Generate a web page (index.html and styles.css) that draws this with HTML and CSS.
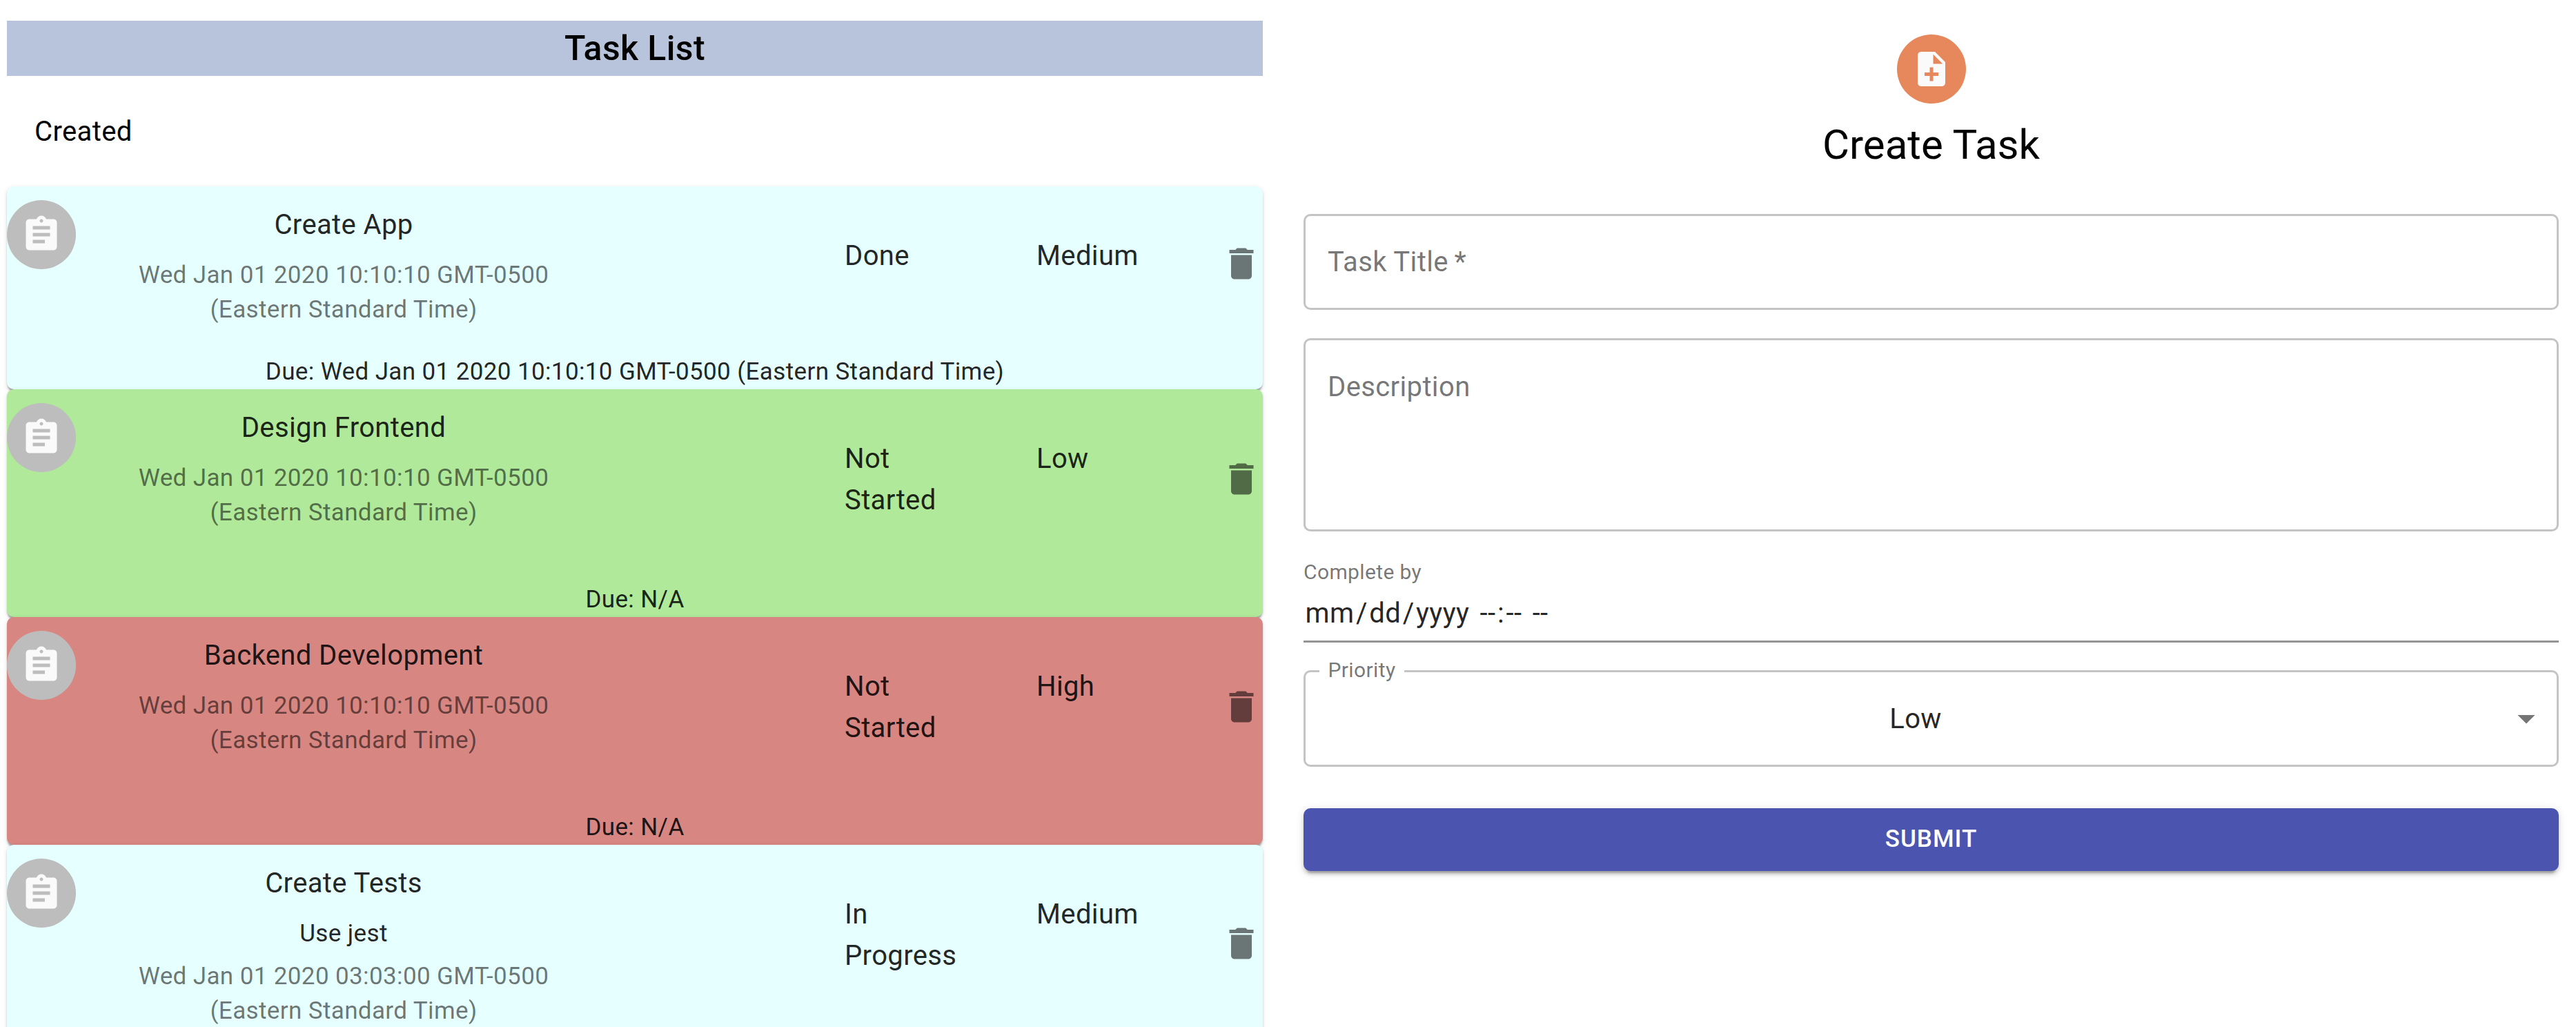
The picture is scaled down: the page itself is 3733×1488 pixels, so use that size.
FILE: index.html
```html
<!DOCTYPE html>
<html lang="en">
<head>
<meta charset="utf-8">
<title>Tasks</title>
<link rel="stylesheet" href="styles.css">
</head>
<body>
<main class="page">
  <section class="list-col">
    <h1 class="list-title">Task List</h1>
    <div class="group-label">Created</div>

    <article class="card card-cyan">
      <div class="card-row">
        <div class="avatar"><svg class="icon" viewBox="0 0 24 24"><path d="M19 3h-4.18C14.4 1.84 13.3 1 12 1c-1.3 0-2.4.84-2.82 2H5c-1.1 0-2 .9-2 2v14c0 1.1.9 2 2 2h14c1.1 0 2-.9 2-2V5c0-1.1-.9-2-2-2zm-7 0c.55 0 1 .45 1 1s-.45 1-1 1-1-.45-1-1 .45-1 1-1zm2 14H7v-2h7v2zm3-4H7v-2h10v2zm0-4H7V7h10v2z"/></svg></div>
        <div class="task-text">
          <div class="task-name">Create App</div>
          <div class="task-date">Wed Jan 01 2020 10:10:10 GMT-0500 (Eastern Standard Time)</div>
        </div>
        <div class="task-status">Done</div>
        <div class="task-priority">Medium</div>
        <svg class="trash" viewBox="0 0 24 24"><path d="M6 19c0 1.1.9 2 2 2h8c1.1 0 2-.9 2-2V7H6v12zM19 4h-3.5l-1-1h-5l-1 1H5v2h14V4z"/></svg>
      </div>
      <div class="task-due">Due: Wed Jan 01 2020 10:10:10 GMT-0500 (Eastern Standard Time)</div>
    </article>

    <article class="card card-green">
      <div class="card-row card-row-tall">
        <div class="avatar"><svg class="icon" viewBox="0 0 24 24"><path d="M19 3h-4.18C14.4 1.84 13.3 1 12 1c-1.3 0-2.4.84-2.82 2H5c-1.1 0-2 .9-2 2v14c0 1.1.9 2 2 2h14c1.1 0 2-.9 2-2V5c0-1.1-.9-2-2-2zm-7 0c.55 0 1 .45 1 1s-.45 1-1 1-1-.45-1-1 .45-1 1-1zm2 14H7v-2h7v2zm3-4H7v-2h10v2zm0-4H7V7h10v2z"/></svg></div>
        <div class="task-text">
          <div class="task-name">Design Frontend</div>
          <div class="task-date">Wed Jan 01 2020 10:10:10 GMT-0500 (Eastern Standard Time)</div>
        </div>
        <div class="task-status">Not Started</div>
        <div class="task-priority">Low</div>
        <svg class="trash" viewBox="0 0 24 24"><path d="M6 19c0 1.1.9 2 2 2h8c1.1 0 2-.9 2-2V7H6v12zM19 4h-3.5l-1-1h-5l-1 1H5v2h14V4z"/></svg>
      </div>
      <div class="task-due">Due: N/A</div>
    </article>

    <article class="card card-red">
      <div class="card-row card-row-tall">
        <div class="avatar"><svg class="icon" viewBox="0 0 24 24"><path d="M19 3h-4.18C14.4 1.84 13.3 1 12 1c-1.3 0-2.4.84-2.82 2H5c-1.1 0-2 .9-2 2v14c0 1.1.9 2 2 2h14c1.1 0 2-.9 2-2V5c0-1.1-.9-2-2-2zm-7 0c.55 0 1 .45 1 1s-.45 1-1 1-1-.45-1-1 .45-1 1-1zm2 14H7v-2h7v2zm3-4H7v-2h10v2zm0-4H7V7h10v2z"/></svg></div>
        <div class="task-text">
          <div class="task-name">Backend Development</div>
          <div class="task-date">Wed Jan 01 2020 10:10:10 GMT-0500 (Eastern Standard Time)</div>
        </div>
        <div class="task-status">Not Started</div>
        <div class="task-priority">High</div>
        <svg class="trash" viewBox="0 0 24 24"><path d="M6 19c0 1.1.9 2 2 2h8c1.1 0 2-.9 2-2V7H6v12zM19 4h-3.5l-1-1h-5l-1 1H5v2h14V4z"/></svg>
      </div>
      <div class="task-due">Due: N/A</div>
    </article>

    <article class="card card-cyan card-last">
      <div class="card-row">
        <div class="avatar"><svg class="icon" viewBox="0 0 24 24"><path d="M19 3h-4.18C14.4 1.84 13.3 1 12 1c-1.3 0-2.4.84-2.82 2H5c-1.1 0-2 .9-2 2v14c0 1.1.9 2 2 2h14c1.1 0 2-.9 2-2V5c0-1.1-.9-2-2-2zm-7 0c.55 0 1 .45 1 1s-.45 1-1 1-1-.45-1-1 .45-1 1-1zm2 14H7v-2h7v2zm3-4H7v-2h10v2zm0-4H7V7h10v2z"/></svg></div>
        <div class="task-text">
          <div class="task-name">Create Tests</div>
          <div class="task-desc">Use jest</div>
          <div class="task-date">Wed Jan 01 2020 03:03:00 GMT-0500 (Eastern Standard Time)</div>
        </div>
        <div class="task-status">In Progress</div>
        <div class="task-priority">Medium</div>
        <svg class="trash" viewBox="0 0 24 24"><path d="M6 19c0 1.1.9 2 2 2h8c1.1 0 2-.9 2-2V7H6v12zM19 4h-3.5l-1-1h-5l-1 1H5v2h14V4z"/></svg>
      </div>
    </article>
  </section>

  <section class="form-col">
    <div class="form-avatar"><svg class="icon" viewBox="0 0 24 24"><path d="M14 2H6c-1.1 0-1.99.9-1.99 2L4 20c0 1.1.89 2 1.99 2H18c1.1 0 2-.9 2-2V8l-6-6zm2 14h-3v3h-2v-3H8v-2h3v-3h2v3h3v2zm-3-7V3.5L18.5 9H13z"/></svg></div>
    <h2 class="form-title">Create Task</h2>
    <form class="form">
      <div class="field field-single"><span class="placeholder">Task Title&thinsp;*</span></div>
      <div class="field field-multi"><span class="placeholder">Description</span></div>
      <div class="date-field">
        <div class="date-label">Complete by</div>
        <div class="date-value"><span class="seg">mm</span>/<span class="seg">dd</span>/<span class="seg">yyyy</span> <span class="seg">--</span>:<span class="seg">--</span> <span class="seg">--</span></div>
      </div>
      <div class="select-field">
        <span class="select-label">Priority</span>
        <span class="select-value">Low</span>
        <svg class="select-arrow" viewBox="0 0 24 24"><path d="M7 10l5 5 5-5z"/></svg>
      </div>
      <div class="submit">SUBMIT</div>
    </form>
  </section>
</main>
</body>
</html>
```

FILE: styles.css
```css
* { box-sizing: border-box; }
html, body {
  margin: 0;
  height: 1488px;
  overflow: hidden;
  background: #fff;
}
body {
  font-family: Roboto, "Liberation Sans", sans-serif;
  color: rgba(0, 0, 0, 0.87);
  letter-spacing: 0.375px;
}
.page {
  display: flex;
  gap: 59px;
  padding: 0 25px 0 10px;
}
.list-col {
  flex: 0 0 1820px;
  padding-top: 30px;
}
.form-col {
  flex: 1;
  display: flex;
  flex-direction: column;
  align-items: center;
  padding-top: 50px;
}
.list-title {
  margin: 0;
  height: 80px;
  line-height: 80px;
  text-align: center;
  font-size: 50px;
  font-weight: 500;
  color: #000;
  background: #b8c4dc;
}
.group-label {
  height: 160px;
  display: flex;
  align-items: center;
  padding-left: 40px;
  font-size: 40px;
  color: #000;
}
.card {
  position: relative;
  border-radius: 10px;
  box-shadow: 0 5px 2.5px -2.5px rgba(0,0,0,.2), 0 2.5px 2.5px 0 rgba(0,0,0,.14), 0 2.5px 7.5px 0 rgba(0,0,0,.12);
}
.card-cyan { background: #e6ffff; }
.card-green { background: #afe999; }
.card-red { background: #d88682; }
.card-last { min-height: 360px; }
.card-row {
  display: flex;
  align-items: flex-start;
  padding-bottom: 20px;
}
.card-row-tall { min-height: 280px; }
.avatar {
  flex: 0 0 100px;
  height: 100px;
  margin-top: 20px;
  border-radius: 50%;
  background: #bdbdbd;
  display: flex;
  align-items: center;
  justify-content: center;
}
.icon {
  width: 60px;
  height: 60px;
  fill: #fafafa;
}
.task-text {
  flex: 0 0 776px;
  padding: 26px 70px 20px;
  text-align: center;
}
.task-name {
  font-size: 40px;
  line-height: 60px;
  margin-bottom: 18px;
}
.task-desc {
  font-size: 35px;
  line-height: 50px;
  margin-bottom: 12px;
}
.task-date {
  font-size: 35px;
  line-height: 50px;
  color: rgba(0, 0, 0, 0.54);
}
.task-status {
  flex: 0 0 278px;
  margin: 71px 0 0 338px;
  padding-right: 90px;
  font-size: 40px;
  line-height: 60px;
}
.task-priority {
  flex: 0 0 266.5px;
  margin-top: 71px;
  font-size: 40px;
  line-height: 60px;
}
.trash {
  flex: 0 0 60px;
  width: 60px;
  height: 60px;
  align-self: center;
  fill: rgba(0, 0, 0, 0.54);
}
.task-due {
  font-size: 35px;
  line-height: 50px;
  text-align: center;
}
.form-avatar {
  width: 100px;
  height: 100px;
  border-radius: 50%;
  background: #e6885c;
  display: flex;
  align-items: center;
  justify-content: center;
}
.form-title {
  margin: 20px 0 0;
  font-size: 60px;
  font-weight: 400;
  line-height: 80px;
  letter-spacing: 0;
  color: #000;
}
.form {
  width: 100%;
  margin-top: 60px;
}
.field {
  border: 3px solid #c4c4c4;
  border-radius: 10px;
  padding-left: 32px;
  font-size: 40px;
}
.field-single {
  height: 139px;
  display: flex;
  align-items: center;
}
.field-multi {
  height: 280px;
  margin-top: 41px;
  padding-top: 43.5px;
  line-height: 47px;
}
.placeholder { color: rgba(0, 0, 0, 0.54); }
.date-field {
  margin-top: 41px;
  height: 120px;
  border-bottom: 3px solid #949494;
}
.date-label {
  font-size: 30px;
  line-height: 35px;
  color: rgba(0, 0, 0, 0.54);
}
.date-value {
  margin-top: 19px;
  font-size: 40px;
  line-height: 47px;
}
.seg { padding: 0 2.5px; }
.select-field {
  position: relative;
  height: 140px;
  margin-top: 40px;
  border: 3px solid #c4c4c4;
  border-radius: 10px;
  display: flex;
  align-items: center;
  justify-content: center;
  padding-right: 45px;
  font-size: 40px;
}
.select-label {
  position: absolute;
  left: 20px;
  top: -23px;
  padding: 0 12.5px;
  background: #fff;
  font-size: 30px;
  line-height: 40px;
  color: rgba(0, 0, 0, 0.54);
}
.select-arrow {
  position: absolute;
  right: 14.5px;
  top: 37px;
  width: 60px;
  height: 60px;
  fill: rgba(0, 0, 0, 0.54);
}
.submit {
  height: 91px;
  margin-top: 60px;
  padding-bottom: 2px;
  border-radius: 10px;
  background: #4b54ae;
  color: #fff;
  display: flex;
  align-items: center;
  justify-content: center;
  font-size: 35px;
  font-weight: 500;
  letter-spacing: 1px;
  box-shadow: 0 7.5px 2.5px -5px rgba(0,0,0,.2), 0 5px 5px 0 rgba(0,0,0,.14), 0 2.5px 12.5px 0 rgba(0,0,0,.12);
}
```
